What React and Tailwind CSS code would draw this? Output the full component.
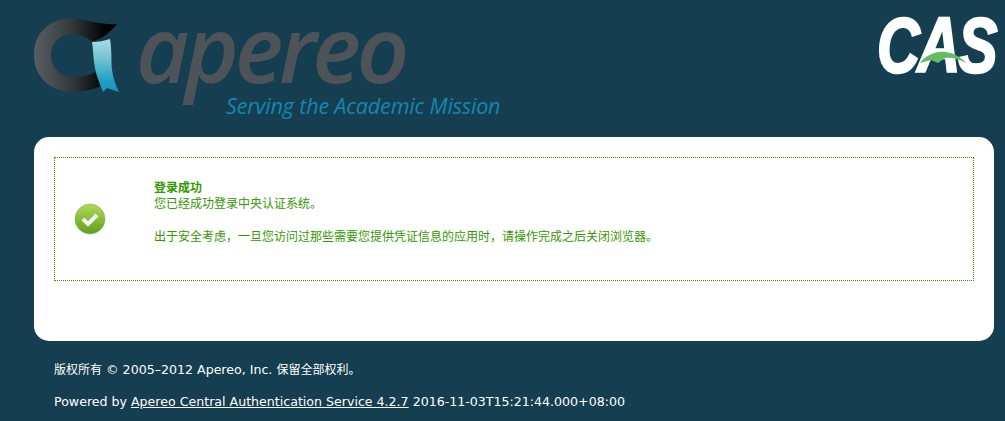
export default function App() {
  return (
    <div className="w-[1005px] h-[421px] overflow-hidden bg-[#153e50] font-['DejaVu_Sans',sans-serif]">
      <header className="h-[137px] pl-[34px] pr-[12px] flex justify-between">
        <div className="flex items-start">
          <svg width="86" height="84" viewBox="34 14 86 84" className="mt-[14px] shrink-0">
            <defs>
              <linearGradient id="ring" x1="34" y1="0" x2="104" y2="0" gradientUnits="userSpaceOnUse">
                <stop offset="0" stopColor="#585e63" />
                <stop offset="0.55" stopColor="#34383b" />
                <stop offset="1" stopColor="#020304" />
              </linearGradient>
              <linearGradient id="ribbon" x1="0" y1="39" x2="0" y2="92" gradientUnits="userSpaceOnUse">
                <stop offset="0" stopColor="#a5dde0" />
                <stop offset="0.35" stopColor="#78c4d3" />
                <stop offset="0.8" stopColor="#1f9fc4" />
                <stop offset="1" stopColor="#1a95bb" />
              </linearGradient>
            </defs>
            <path fill="url(#ring)" d="M117 24 C105 25 94 22 84 20 C60 13 34 26 34 55 C34 78 52 92 72 92 C82 92 91 90 101 86 L95 72 C88 76 80 77 72 77 C60 77 51 67 51 55 C51 43 60 34 72 34 C80 34 87 37 92 42 C100 39 105 36 108 33 C112 30 115 27 117 24 Z" />
            <path fill="url(#ribbon)" d="M92 42 C98 42 104 41 110 39 C112 50 111 62 112 70 C113 78 116 86 119 92 L107 88 L103 92 C99 82 95 72 94 62 C93 54 93 48 92 42 Z" />
          </svg>
          <div className="ml-[16px] flex flex-col">
            <span className="text-[92px] leading-[92px] mt-[2px] italic font-semibold text-[#4d5358] font-['Open_Sans',sans-serif] tracking-[-4.3px]">apereo</span>
            <span className="ml-[90px] text-[21.6px] leading-[24px] italic text-[#1586ae] font-['Open_Sans',sans-serif] tracking-[-0.2px] whitespace-nowrap">Serving the Academic Mission</span>
          </div>
        </div>
        <div className="relative w-[116px] h-[76px] mt-[5px]">
          <span className="block origin-left scale-x-[0.76] text-[78px] leading-[80px] font-bold italic text-white font-['Liberation_Sans',sans-serif] tracking-[-3px] whitespace-nowrap [-webkit-text-stroke:2.5px_white]">CAS</span>
          <svg className="absolute left-0 top-0" width="116" height="76" viewBox="877 5 116 76">
            <path fill="#62bd62" d="M920 63 C926 55 936 51 945 52 C954 53 961 57 966 63 C959 59 951 57 945 58 L938 63 L931 60 Z" />
          </svg>
        </div>
      </header>
      <main className="ml-[34px] w-[960px] h-[204px] bg-white rounded-[15px] p-[20px]">
        <div className="h-[124px] border border-dotted border-[#339900] flex items-center pl-[19px] text-[#339900] text-[12px] font-['DejaVu_Sans','Noto_Sans_CJK_SC',sans-serif]">
          <svg width="32" height="32" viewBox="0 0 32 32" className="shrink-0">
            <defs>
              <linearGradient id="ok" x1="0" y1="0" x2="0" y2="1">
                <stop offset="0" stopColor="#b4d95a" />
                <stop offset="1" stopColor="#5f9e1f" />
              </linearGradient>
            </defs>
            <circle cx="16" cy="16" r="15" fill="url(#ok)" stroke="#7fa84a" strokeWidth="0.5" />
            <path d="M9 16 L14 21 L23 12" fill="none" stroke="#f2f7ea" strokeWidth="4" />
          </svg>
          <div className="ml-[48px] pb-[13px] leading-[16px]">
            <p className="font-bold">登录成功</p>
            <p>您已经成功登录中央认证系统。</p>
            <p className="mt-[17px]">出于安全考虑，一旦您访问过那些需要您提供凭证信息的应用时，请操作完成之后关闭浏览器。</p>
          </div>
        </div>
      </main>
      <footer className="pl-[54px] pt-[21px] text-white text-[12.6px] font-['DejaVu_Sans','Noto_Sans_CJK_SC',sans-serif]">
        <p className="leading-[16px]"><span className="text-[12px]">版权所有</span> © 2005–2012 Apereo, Inc. <span className="text-[12px]">保留全部权利。</span></p>
        <p className="leading-[16px] mt-[16px]">Powered by <a className="underline">Apereo Central Authentication Service 4.2.7</a> 2016-11-03T15:21:44.000+08:00</p>
      </footer>
    </div>
  );
}
